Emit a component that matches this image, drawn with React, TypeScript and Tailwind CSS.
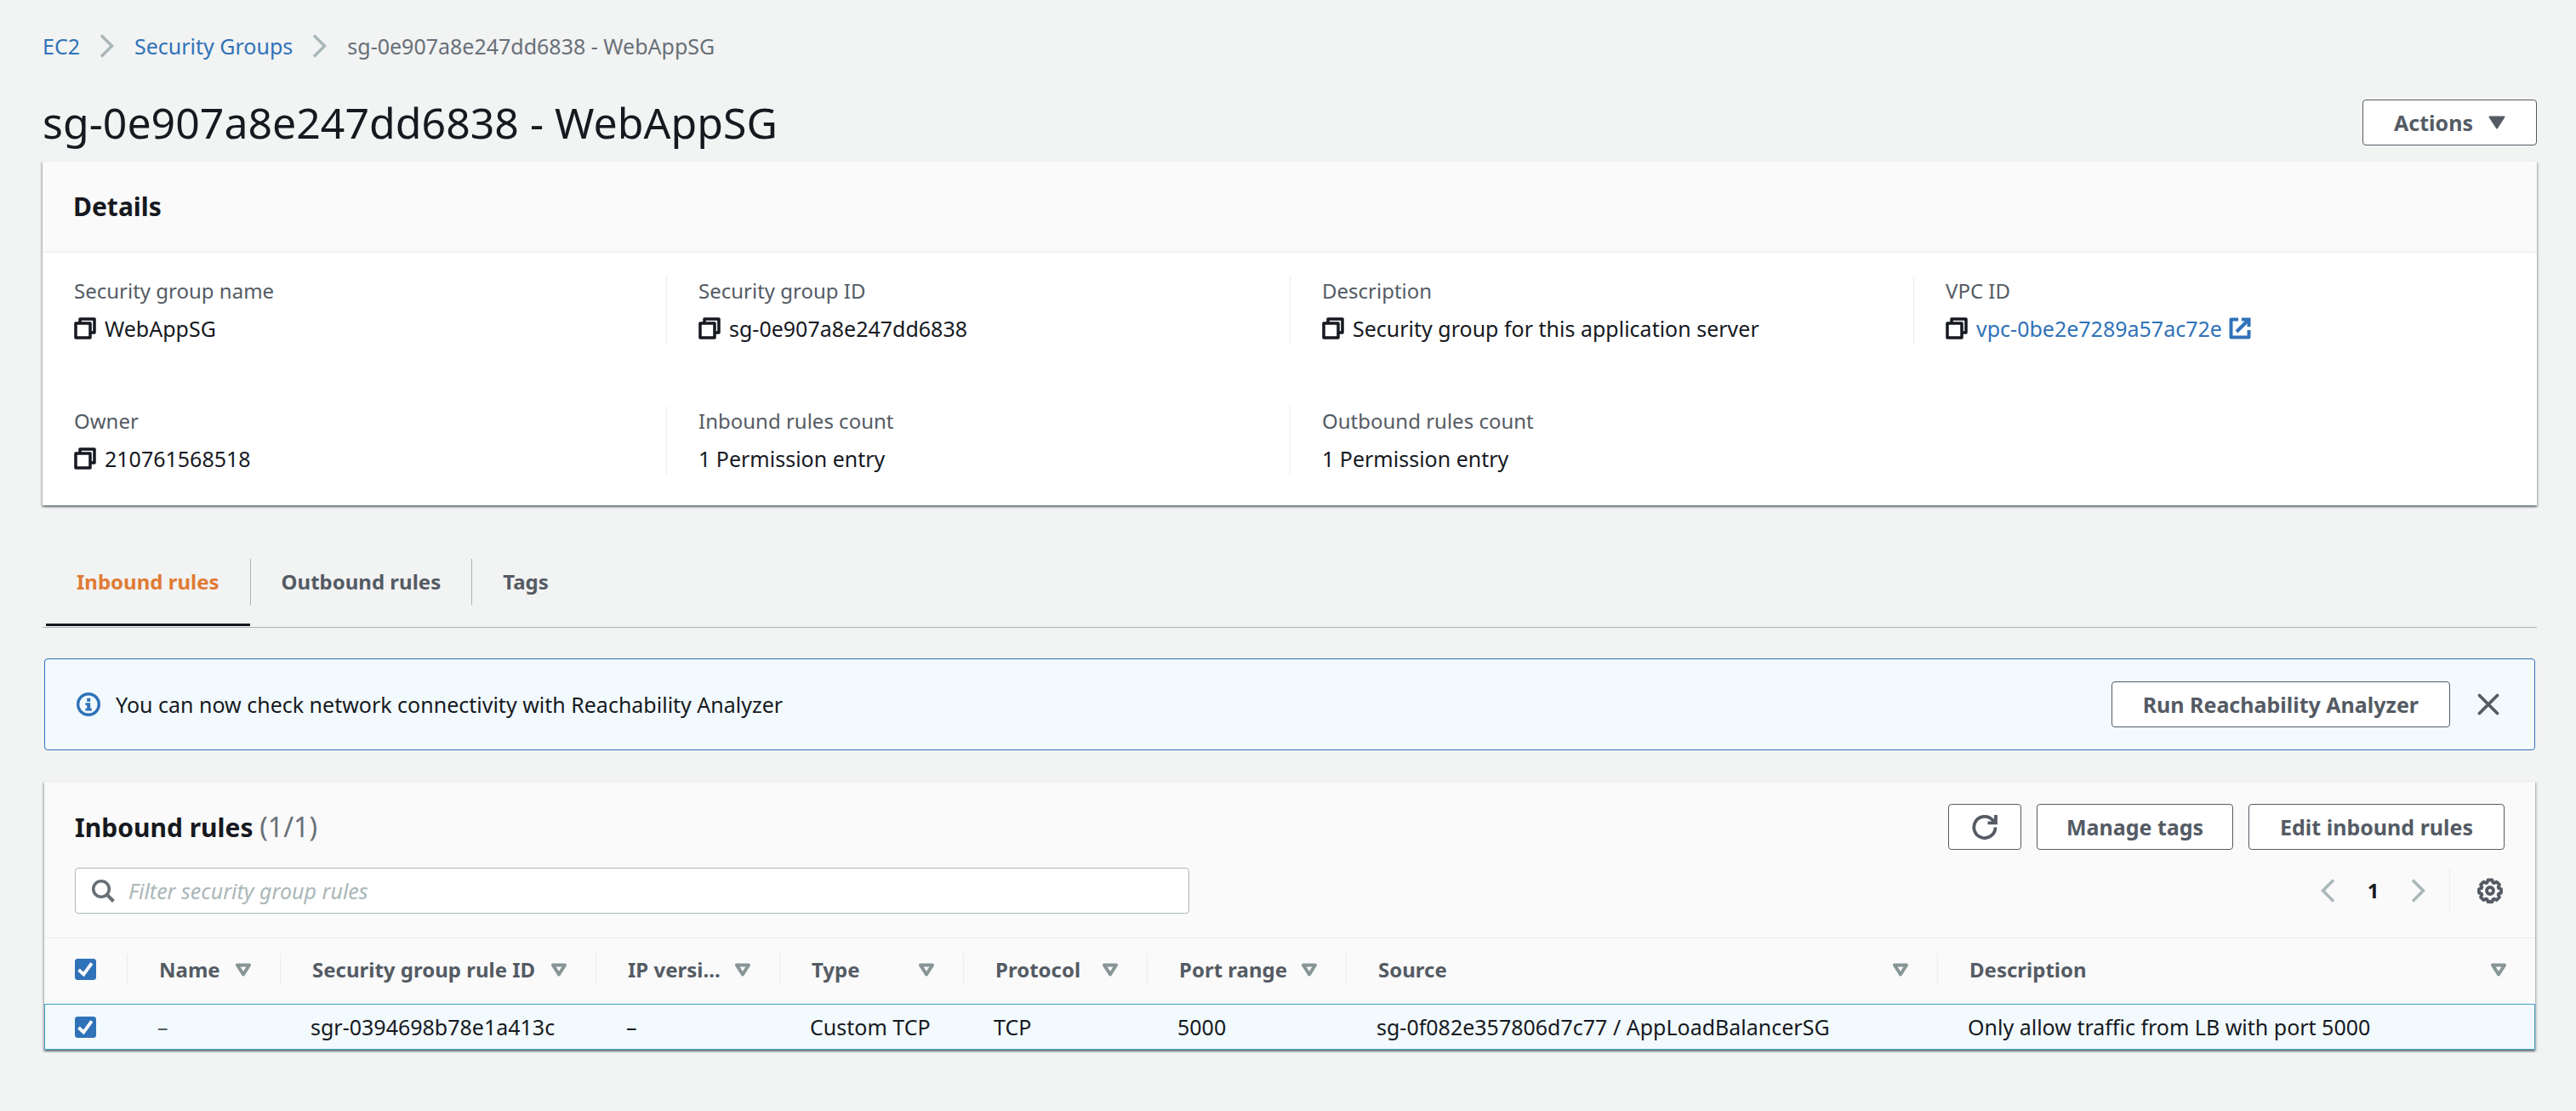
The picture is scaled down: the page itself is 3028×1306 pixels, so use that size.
import React, { useState } from "react";

const panelClass =
  "border-t border-[#eaeded] bg-white shadow-[0_2px_2px_0_rgba(0,28,36,0.4),2px_2px_2px_0_rgba(0,28,36,0.15),-2px_2px_2px_0_rgba(0,28,36,0.15)]";

const buttonClass =
  "flex h-[54px] shrink-0 items-center justify-center rounded-[4px] border border-[#545b64] bg-white text-[25px] font-bold text-[#545b64]";

function CopyIcon() {
  return (
    <svg viewBox="0 0 26 26" className="size-[26px]" fill="none" stroke="currentColor" strokeWidth="3.5" strokeLinejoin="round" aria-hidden="true">
      <path d="M7 6V2h17v16h-5" />
      <path d="M2 7h17v17H2z" />
    </svg>
  );
}

function ExternalIcon() {
  return (
    <svg viewBox="0 0 26 26" className="size-[26px] shrink-0" fill="none" stroke="currentColor" strokeWidth="4" aria-hidden="true">
      <path d="M11 2.5H2.5v21h21V15" strokeLinejoin="round" />
      <path d="M15 2.5h8.500V11" />
      <path d="M23 3L9 17" />
    </svg>
  );
}

function ChevronIcon({ left = false }: { left?: boolean }) {
  return (
    <svg viewBox="0 0 16 28" className="h-7 w-4 shrink-0 text-[#aab7b8]" fill="none" stroke="currentColor" strokeWidth="3.5" aria-hidden="true">
      <path d={left ? "M15 1.500L2.500 14L15 26.500" : "M1 1.500L13.500 14L1 26.500"} />
    </svg>
  );
}

function SortIcon() {
  return (
    <svg viewBox="0 0 18 16" className="h-4 w-[18px]" fill="none" stroke="currentColor" strokeWidth="4" strokeLinejoin="round" aria-hidden="true">
      <path d="M2 2.500h14L9 13.500z" />
    </svg>
  );
}

function InfoIcon() {
  return (
    <svg viewBox="0 0 28 28" className="size-7 shrink-0 text-[#3072b8]" fill="none" stroke="currentColor" aria-hidden="true">
      <circle cx="14" cy="14" r="12.300" strokeWidth="3.400" />
      <path d="M12.200 6.700h4v4h-4zM10.400 12.200h5.800v6.600h1.700v2.700h-7.500v-2.700h1.800v-3.900h-1.800z" fill="currentColor" stroke="none" />
    </svg>
  );
}

function CloseIcon() {
  return (
    <svg viewBox="0 0 26 26" className="size-[26px]" fill="none" stroke="currentColor" strokeWidth="3.800" strokeLinecap="round" aria-hidden="true">
      <path d="M2.500 2.500l21 21M23.500 2.500l-21 21" />
    </svg>
  );
}

function RefreshIcon() {
  return (
    <svg viewBox="0 0 30 30" className="size-[30px]" fill="none" stroke="currentColor" strokeWidth="3.800" aria-hidden="true">
      <path d="M27.500 15.500A12.600 12.600 0 1 1 24.500 7.300L27 9.500" />
      <path d="M28 1v9.300H18.500" />
    </svg>
  );
}

function SearchIcon() {
  return (
    <svg viewBox="0 0 28 28" className="size-7 shrink-0 text-[#687078]" fill="none" stroke="currentColor" strokeWidth="3.600" aria-hidden="true">
      <circle cx="12" cy="12" r="9.300" />
      <path d="M18.500 18.500l8 8" strokeWidth="4" />
    </svg>
  );
}

function GearIcon() {
  return (
    <svg viewBox="0 0 30 30" className="size-[30px]" fill="none" stroke="currentColor" strokeWidth="3.800" strokeLinejoin="round" aria-hidden="true">
      <path d="M12.500 2.500h5l1 2.900 1.300.6 2.800-1.400 3.400 3.300-1.400 2.900.6 1.300 2.800.9v4.600l-2.800 1-.6 1.300 1.400 2.800-3.300 3.300-2.900-1.400-1.300.6-1 2.800h-5l-1-2.800-1.300-.6-2.900 1.400-3.300-3.300 1.400-2.800-.6-1.300-2.800-1v-4.600l2.800-.9.6-1.300L4 7.900l3.400-3.300 2.800 1.400 1.300-.6z" />
      <circle cx="15" cy="15" r="4" />
    </svg>
  );
}

function TickBox({ label }: { label: string }) {
  const [checked, setChecked] = useState(true);
  return (
    <label className="relative block size-[25px]">
      <input
        type="checkbox"
        aria-label={label}
        checked={checked}
        onChange={(e) => setChecked(e.target.checked)}
        className="block size-[25px] appearance-none rounded-[3px] border border-[#3072b8] bg-white checked:bg-[#3072b8]"
      />
      <svg viewBox="0 0 25 25" className="pointer-events-none absolute inset-0 size-[25px]" fill="none" stroke="white" strokeWidth="3.800" aria-hidden="true">
        <path d="M4.500 13l5.800 5.300L19.800 5.300" />
      </svg>
    </label>
  );
}

type Detail = { label: string; value: string; copy?: boolean; href?: string };

const details: Detail[] = [
  { label: "Security group name", value: "WebAppSG", copy: true },
  { label: "Security group ID", value: "sg-0e907a8e247dd6838", copy: true },
  { label: "Description", value: "Security group for this application server", copy: true },
  { label: "VPC ID", value: "vpc-0be2e7289a57ac72e", copy: true, href: "#vpc" },
  { label: "Owner", value: "210761568518", copy: true },
  { label: "Inbound rules count", value: "1 Permission entry" },
  { label: "Outbound rules count", value: "1 Permission entry" },
];

const columns = [
  { title: "Name", width: "w-[180px]", value: "–" },
  { title: "Security group rule ID", width: "w-[371px]", value: "sgr-0394698b78e1a413c" },
  { title: "IP versi...", width: "w-[216px]", value: "–" },
  { title: "Type", width: "w-[216px]", value: "Custom TCP" },
  { title: "Protocol", width: "w-[216px]", value: "TCP" },
  { title: "Port range", width: "w-[234px]", value: "5000" },
  { title: "Source", width: "w-[695px]", value: "sg-0f082e357806d7c77 / AppLoadBalancerSG" },
  { title: "Description", width: "w-auto", value: "Only allow traffic from LB with port 5000" },
];

const tabs = ["Inbound rules", "Outbound rules", "Tags"];

function DetailsPanel() {
  return (
    <section className={panelClass}>
      <header className="border-b border-[#eaeded] bg-[#fafafa] px-9 py-[33px]">
        <h2 className="text-[30px] leading-10 font-bold">Details</h2>
      </header>
      <dl className="grid grid-cols-4 gap-y-[72px] pt-[27px] pb-9">
        {details.map((d, i) => (
          <div
            key={d.label}
            className={
              i % 4 === 0
                ? "flex h-[81px] flex-col gap-2 px-[37px]"
                : "flex h-[81px] flex-col gap-2 border-l border-[#eaeded] px-[37px]"
            }
          >
            <dt className="text-[#545b64]">{d.label}</dt>
            <dd className="flex items-center gap-[10px] text-[25px]">
              {d.copy && (
                <button type="button" aria-label={"Copy " + d.label} className="shrink-0">
                  <CopyIcon />
                </button>
              )}
              {d.href ? (
                <a href={d.href} className="flex items-center gap-2 text-[#3072b8]">
                  {d.value}
                  <ExternalIcon />
                </a>
              ) : (
                <span>{d.value}</span>
              )}
            </dd>
          </div>
        ))}
      </dl>
    </section>
  );
}

function TabBar() {
  const [active, setActive] = useState(0);
  return (
    <div role="tablist" className="mt-[63px] flex border-b border-[#aab7b8] pb-[26px] pl-1">
      {tabs.map((t, i) => (
        <button
          key={t}
          type="button"
          role="tab"
          aria-selected={i === active}
          onClick={() => setActive(i)}
          className={
            "relative h-[54px] px-9 font-bold " +
            (i < tabs.length - 1 ? "border-r border-[#aab7b8] " : "") +
            (i === active ? "text-[#e07b33]" : "text-[#545b64]")
          }
        >
          {t}
          {i === active && <span className="absolute inset-x-0 top-[76px] h-[3px] bg-[#16191f]" />}
        </button>
      ))}
    </div>
  );
}

function RulesTable() {
  return (
    <table className="w-full table-fixed border-separate border-spacing-0 text-left">
      <thead>
        <tr className="bg-[#fafafa]">
          <th className="w-[98px] pt-[18px] pb-[22px] font-bold">
            <div className="flex h-[37px] items-center border-r border-[#eaeded] pl-9">
              <TickBox label="Select all rules" />
            </div>
          </th>
          {columns.map((c, i) => (
            <th key={c.title} className={"pt-[18px] pb-[22px] font-bold text-[#545b64] " + c.width}>
              <div
                className={
                  "flex h-[37px] items-center justify-between pr-[34px] pl-[37px] " +
                  (i < columns.length - 1 ? "border-r border-[#eaeded]" : "")
                }
              >
                <span className="whitespace-nowrap">{c.title}</span>
                <button type="button" aria-label={"Sort by " + c.title} className="shrink-0 text-[#879596]">
                  <SortIcon />
                </button>
              </div>
            </th>
          ))}
        </tr>
      </thead>
      <tbody>
        <tr className="bg-[#f2fafd] text-[25px]">
          <td className="border-y border-l border-[#429fc8] py-2 pl-[35px]">
            <TickBox label="Select rule sgr-0394698b78e1a413c" />
          </td>
          {columns.map((c, i) => (
            <td
              key={c.title}
              className={
                "border-y border-[#429fc8] py-2 pl-[35px] whitespace-nowrap " +
                (i === columns.length - 1 ? "border-r " : "") +
                (i === 0 ? "text-[#545b64]" : "")
              }
            >
              {c.value}
            </td>
          ))}
        </tr>
      </tbody>
    </table>
  );
}

export default function App() {
  return (
    <main className="min-h-screen bg-[#f2f3f3] pt-9 pr-[46px] pb-[70px] pl-[50px] font-['Noto_Sans','Open_Sans',sans-serif] text-[24px] leading-9 text-[#16191f]">
      <nav aria-label="Breadcrumb" className="flex items-center gap-6 text-[25px]">
        <a href="#ec2" className="text-[#3072b8]">EC2</a>
        <ChevronIcon />
        <a href="#groups" className="text-[#3072b8]">Security Groups</a>
        <ChevronIcon />
        <span className="text-[#687078]">sg-0e907a8e247dd6838 - WebAppSG</span>
      </nav>

      <div className="mt-[42px] mb-[15px] flex items-center justify-between">
        <h1 className="text-[50px] leading-[60px]">sg-0e907a8e247dd6838 - WebAppSG</h1>
        <button type="button" className={buttonClass + " gap-[18px] px-9"}>
          Actions
          <svg viewBox="0 0 20 16" className="h-4 w-5" fill="currentColor" stroke="currentColor" strokeWidth="2" strokeLinejoin="round" aria-hidden="true">
            <path d="M1.500 1.500h17L10 14.500z" />
          </svg>
        </button>
      </div>

      <DetailsPanel />
      <TabBar />

      <div className="px-[2px] pt-9">
        <section className="flex items-center rounded-[4px] border border-[#3072b8] bg-[#f2fafd] px-[37px] py-[26px]">
          <InfoIcon />
          <p className="ml-[18px] grow text-[25px]">You can now check network connectivity with Reachability Analyzer</p>
          <button type="button" className={buttonClass + " px-9"}>Run Reachability Analyzer</button>
          <button type="button" aria-label="Dismiss" className="mr-1 ml-8 text-[#545b64]">
            <CloseIcon />
          </button>
        </section>

        <section className={"mt-9 " + panelClass}>
          <div className="border-b border-[#eaeded] bg-[#fafafa] px-9 pt-[26px] pb-7">
            <div className="flex items-center gap-[18px]">
              <h2 className="grow text-[30px] leading-10 font-bold">
                Inbound rules <span className="text-[32px] font-normal text-[#687078]">(1/1)</span>
              </h2>
              <button type="button" aria-label="Refresh" className={buttonClass + " w-[86px]"}>
                <RefreshIcon />
              </button>
              <button type="button" className={buttonClass + " px-[34px]"}>Manage tags</button>
              <button type="button" className={buttonClass + " px-9"}>Edit inbound rules</button>
            </div>
            <div className="mt-[21px] flex items-center justify-between">
              <div className="flex h-[54px] w-[1310px] items-center gap-4 rounded-[4px] border border-[#aab7b8] bg-white px-[18px]">
                <SearchIcon />
                <input
                  type="text"
                  aria-label="Filter security group rules"
                  placeholder="Filter security group rules"
                  className="w-full bg-transparent text-[25px] outline-none placeholder:text-[#aab7b8] placeholder:italic"
                />
              </div>
              <div className="flex items-center">
                <div className="flex h-[54px] items-center border-r border-[#eaeded] pr-7 font-bold">
                  <button type="button" aria-label="Previous page"><ChevronIcon left /></button>
                  <button type="button" className="w-[91px] text-center">1</button>
                  <button type="button" aria-label="Next page"><ChevronIcon /></button>
                </div>
                <button type="button" aria-label="Preferences" className="ml-8 pr-[2px] text-[#545b64]">
                  <GearIcon />
                </button>
              </div>
            </div>
          </div>
          <RulesTable />
        </section>
      </div>
    </main>
  );
}
